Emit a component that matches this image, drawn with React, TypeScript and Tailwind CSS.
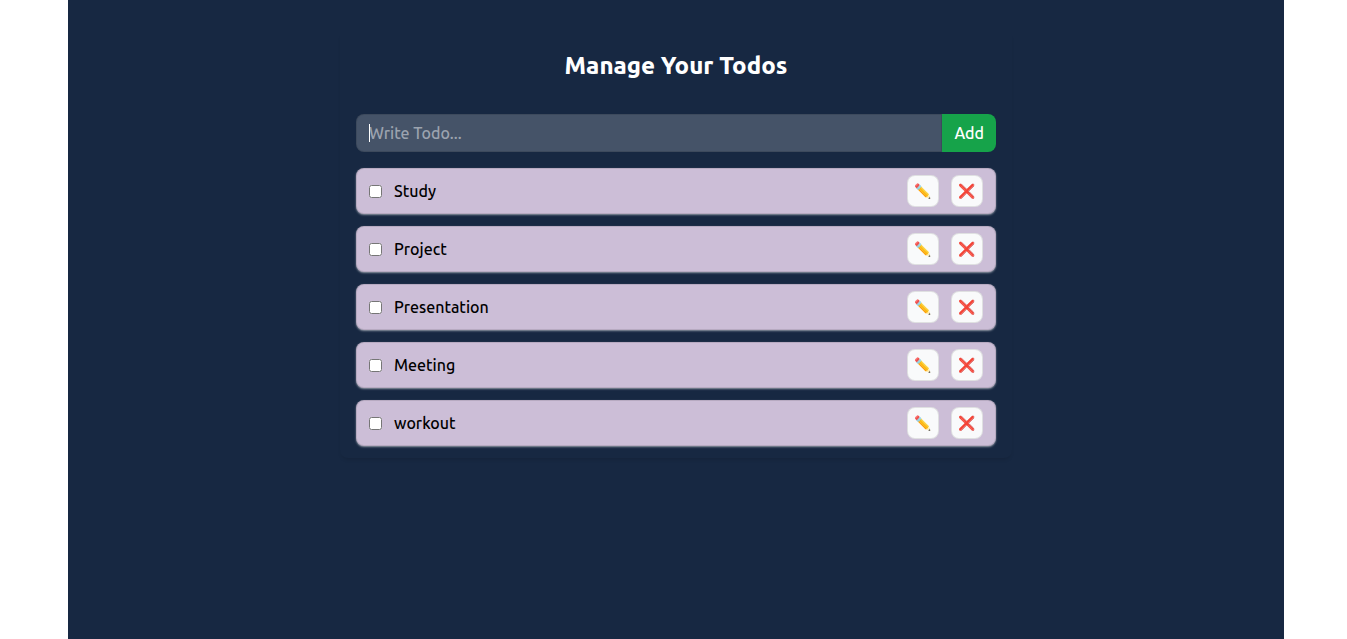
import { useState, type FormEvent } from "react";

type Todo = { id: number; title: string; completed: boolean };

const initialTodos: Todo[] = [
  { id: 1, title: "Study", completed: false },
  { id: 2, title: "Project", completed: false },
  { id: 3, title: "Presentation", completed: false },
  { id: 4, title: "Meeting", completed: false },
  { id: 5, title: "workout", completed: false },
];

function TodoForm({ onAdd }: { onAdd: (title: string) => void }) {
  const [value, setValue] = useState("");
  const [focused, setFocused] = useState(true);

  const submit = (e: FormEvent) => {
    e.preventDefault();
    if (!value.trim()) return;
    onAdd(value.trim());
    setValue("");
  };

  return (
    <form onSubmit={submit} className="mb-4 flex">
      <div className="relative min-w-0 grow">
        <input
          type="text"
          aria-label="Write Todo"
          placeholder="Write Todo..."
          autoFocus
          value={value}
          onFocus={() => setFocused(true)}
          onBlur={() => setFocused(false)}
          onChange={(e) => setValue(e.target.value)}
          className="w-full rounded-l-lg border border-black/10 bg-[#455368] bg-clip-border px-3 py-1.5 outline-none placeholder:text-[#9ca3af]"
        />
        {focused && !value && (
          <span aria-hidden="true" className="pointer-events-none absolute top-2.5 left-[13px] h-[18px] w-px bg-white" />
        )}
      </div>
      <button type="submit" className="shrink-0 rounded-r-lg bg-[#16a34a] px-3 py-1 text-white">
        Add
      </button>
    </form>
  );
}

type ItemProps = {
  todo: Todo;
  onToggle: () => void;
  onRename: (title: string) => void;
  onDelete: () => void;
};

function TodoItem({ todo, onToggle, onRename, onDelete }: ItemProps) {
  const [editing, setEditing] = useState(false);

  return (
    <li className="flex items-center gap-x-3 rounded-lg border border-black/10 bg-[#ccbed7] px-3 py-1.5 text-black shadow-[0_1px_2px_0] shadow-white/50">
      <input
        id={`todo-${todo.id}`}
        type="checkbox"
        checked={todo.completed}
        onChange={onToggle}
        className="size-[13px] shrink-0 cursor-pointer"
      />
      {editing ? (
        <input
          type="text"
          aria-label="Edit todo"
          value={todo.title}
          onChange={(e) => onRename(e.target.value)}
          className="min-w-0 grow bg-transparent outline-none"
        />
      ) : (
        <label htmlFor={`todo-${todo.id}`} className={todo.completed ? "grow line-through" : "grow"}>
          {todo.title}
        </label>
      )}
      <button
        type="button"
        aria-label={`Edit ${todo.title}`}
        onClick={() => setEditing(!editing)}
        className="inline-flex size-8 shrink-0 items-center justify-center rounded-lg border border-black/10 bg-[#f9fafb] font-['Noto_Color_Emoji',sans-serif] text-sm"
      >
        {editing ? "📁" : "✏️"}
      </button>
      <button
        type="button"
        aria-label={`Delete ${todo.title}`}
        onClick={onDelete}
        className="inline-flex size-8 shrink-0 items-center justify-center rounded-lg border border-black/10 bg-[#f9fafb] font-['Noto_Color_Emoji',sans-serif] text-sm"
      >
        ❌
      </button>
    </li>
  );
}

export default function App() {
  const [todos, setTodos] = useState(initialTodos);

  const update = (id: number, patch: Partial<Todo>) =>
    setTodos((list) => list.map((t) => (t.id === id ? { ...t, ...patch } : t)));

  return (
    <div className="bg-white pr-[63px] pl-[68px] font-['Ubuntu','Noto_Sans',sans-serif] font-[480]">
      <main className="min-h-screen bg-[#172842] pt-[30px] pb-8">
        <div className="mx-auto w-full max-w-2xl rounded-lg px-4 py-3 text-white shadow-[0_3px_4px_-2px_rgb(0_0_0/0.15)]">
          <h1 className="mt-2 mb-8 text-center text-2xl font-extrabold">Manage Your Todos</h1>
          <TodoForm
            onAdd={(title) => setTodos((list) => [...list, { id: Date.now(), title, completed: false }])}
          />
          <ul className="flex flex-col gap-y-3">
            {todos.map((todo) => (
              <TodoItem
                key={todo.id}
                todo={todo}
                onToggle={() => update(todo.id, { completed: !todo.completed })}
                onRename={(title) => update(todo.id, { title })}
                onDelete={() => setTodos((list) => list.filter((t) => t.id !== todo.id))}
              />
            ))}
          </ul>
        </div>
      </main>
    </div>
  );
}
